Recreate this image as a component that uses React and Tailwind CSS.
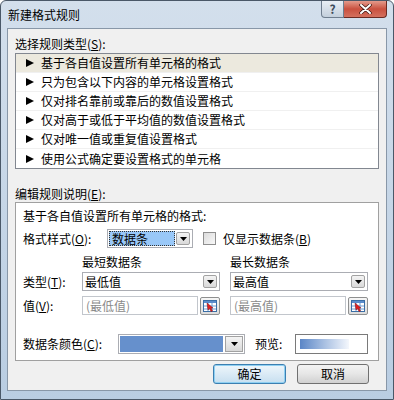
import React from "react";

const FONT = { fontFamily: '"Noto Sans CJK SC", "Liberation Sans", sans-serif' };

const rules = [
  "基于各自值设置所有单元格的格式",
  "只为包含以下内容的单元格设置格式",
  "仅对排名靠前或靠后的数值设置格式",
  "仅对高于或低于平均值的数值设置格式",
  "仅对唯一值或重复值设置格式",
  "使用公式确定要设置格式的单元格",
];

const Key = ({ k }) => (
  <span>
    (<span className="underline">{k}</span>)
  </span>
);

const Arrow = () => (
  <span className="flex h-[13px] w-[14px] items-center justify-center rounded-[2px] border border-[#a2a2a2] bg-gradient-to-b from-[#f4f4f4] to-[#d9d9d9]">
    <svg width="7" height="4" viewBox="0 0 7 4">
      <path d="M0 0h7L3.5 4z" fill="#000" />
    </svg>
  </span>
);

const Combo = ({ children, className = "" }) => (
  <div className={`flex h-[19px] items-center justify-between border border-[#abadb3] bg-white pl-[2px] pr-[2px] ${className}`}>
    {children}
    <Arrow />
  </div>
);

const RefButton = () => (
  <div className="flex h-[18px] w-[20px] items-center justify-center rounded-[2px] border border-[#8e8f8f] bg-gradient-to-b from-[#f6f6f6] to-[#dcdcdc]">
    <svg width="14" height="12" viewBox="0 0 14 12">
      <rect x="0.5" y="0.5" width="13" height="11" fill="#fff" stroke="#3a6ea5" />
      <rect x="1" y="1" width="12" height="2" fill="#5a8ccc" />
      <path d="M1 6h12M1 9h12M5 3v8M9 3v8" stroke="#6c9bd2" strokeWidth="1" />
      <path d="M4 3l6 5-2 0 1.5 3-1.5 .6L6.6 8.6 5 10z" fill="#e02020" stroke="#901010" strokeWidth="0.5" />
    </svg>
  </div>
);

export default function App() {
  return (
    <div
      className="flex h-[400px] w-[394px] flex-col overflow-hidden rounded-t-[6px] border border-[#4a5868] bg-gradient-to-b from-[#d3dfec] via-[#c6d6e7] to-[#b9cde2] text-[12px] text-black"
      style={FONT}
    >
      {/* title bar */}
      <div className="flex h-[27px] shrink-0 items-start justify-between pl-[7px] pr-[6px]">
        <div className="mt-[6px] leading-4">新建格式规则</div>
        <div className="flex">
          <div className="flex h-[17px] w-[23px] items-center justify-center rounded-bl-[4px] border border-t-0 border-[#6e7d8e] bg-gradient-to-b from-[#e8eef5] to-[#c3cfdc] text-[12px] font-bold leading-none text-[#3c4a5a]">
            ?
          </div>
          <div className="flex h-[17px] w-[43px] items-center justify-center rounded-br-[4px] border border-l-0 border-t-0 border-[#6b2a22] bg-gradient-to-b from-[#e39a8c] via-[#c9503f] to-[#d4705e]">
            <svg width="13" height="10" viewBox="0 0 13 10">
              <path d="M2 1l9 8M11 1L2 9" stroke="#3a1510" strokeWidth="3.4" strokeLinecap="round" />
              <path d="M2 1l9 8M11 1L2 9" stroke="#fff" strokeWidth="2" strokeLinecap="round" />
            </svg>
          </div>
        </div>
      </div>

      {/* client area */}
      <div className="mx-[6px] mb-[8px] flex flex-1 flex-col border border-[#8897a8] bg-[#f0f0f0] px-[7px]">
        <div className="mt-[7px] leading-4">
          选择规则类型<Key k="S" />:
        </div>
        <div className="mt-[1px] border border-[#828790] bg-white">
          {rules.map((r, i) => (
            <div
              key={r}
              className={`flex h-[19px] items-center border-b border-[#f0f0f0] last:border-b-0 pl-[10px] ${
                i === 0 ? "bg-[#ece9de]" : ""
              }`}
            >
              <svg width="8" height="8" viewBox="0 0 8 8" className="mr-[7px]">
                <path d="M0 0L8 4L0 8z" fill="#000" />
              </svg>
              <span>{r}</span>
            </div>
          ))}
        </div>

        <div className="mt-[17px] leading-4">
          编辑规则说明<Key k="E" />:
        </div>
        <div className="flex flex-col border border-[#a0a0a0] bg-white px-[7px] pb-[6px] pt-[5px]">
          <div className="leading-4">基于各自值设置所有单元格的格式:</div>

          <div className="mt-[5px] flex h-[19px] items-center">
            <div className="w-[84px]">
              格式样式<Key k="O" />:
            </div>
            <div className="flex h-[19px] w-[86px] items-center justify-between border border-[#abadb3] bg-white pl-[1px] pr-[2px]">
              <span className="flex h-[15px] w-[66px] items-center border border-dotted border-[#333] bg-[#99c8f8] pl-[2px]">
                数据条
              </span>
              <Arrow />
            </div>
            <span className="ml-[10px] h-[13px] w-[13px] border border-[#8f8f8f] bg-gradient-to-br from-[#dcdcdc] to-[#f8f8f8]" />
            <span className="ml-[7px]">
              仅显示数据条<Key k="B" />
            </span>
          </div>

          <div className="mt-[6px] flex leading-4">
            <div className="w-[59px]" />
            <div className="w-[148px]">最短数据条</div>
            <div>最长数据条</div>
          </div>

          <div className="mt-[2px] flex h-[19px] items-center">
            <div className="w-[59px]">
              类型<Key k="T" />:
            </div>
            <Combo className="w-[138px]">最低值</Combo>
            <Combo className="ml-[10px] w-[138px]">最高值</Combo>
          </div>

          <div className="mt-[5px] flex h-[19px] items-center">
            <div className="w-[59px]">
              值<Key k="V" />:
            </div>
            <div className="flex w-[138px] items-center">
              <div className="flex h-[19px] w-[116px] items-center border border-[#c2c6cc] bg-white pl-[3px] text-[#8a8a8a]">
                (最低值)
              </div>
              <div className="ml-[2px]">
                <RefButton />
              </div>
            </div>
            <div className="ml-[10px] flex w-[138px] items-center">
              <div className="flex h-[19px] w-[116px] items-center border border-[#c2c6cc] bg-white pl-[3px] text-[#8a8a8a]">
                (最高值)
              </div>
              <div className="ml-[2px]">
                <RefButton />
              </div>
            </div>
          </div>

          <div className="mt-[19px] flex h-[20px] items-center">
            <div className="w-[95px]">
              数据条颜色<Key k="C" />:
            </div>
            <div className="flex h-[20px] w-[127px] items-center border border-[#abadb3] bg-white pl-[1px] pr-[1px]">
              <span className="h-[16px] w-[104px] bg-[#6690cc]" />
              <span className="ml-[2px] flex h-[16px] w-[18px] items-center justify-center border border-[#a2a2a2] bg-gradient-to-b from-[#f4f4f4] to-[#d9d9d9]">
                <svg width="7" height="4" viewBox="0 0 7 4">
                  <path d="M0 0h7L3.5 4z" fill="#000" />
                </svg>
              </span>
            </div>
            <div className="ml-[10px] w-[40px]">预览:</div>
            <div className="flex h-[20px] w-[73px] items-center border border-[#7a7a7a] bg-white px-[4px]">
              <span className="h-[10px] w-[49px] bg-gradient-to-r from-[#5b86c6] via-[#a9c0e2] to-[#f4f7fc]" />
            </div>
          </div>
        </div>

        <div className="mt-[3px] flex justify-end gap-[11px] pr-[10px]">
          <button className="flex h-[20px] w-[73px] items-center justify-center rounded-[3px] border border-[#3c7fb1] bg-gradient-to-b from-[#eef6fb] to-[#c7dff0] shadow-[inset_0_0_0_1px_#8fd0f2]">
            确定
          </button>
          <button className="flex h-[20px] w-[72px] items-center justify-center rounded-[3px] border border-[#707070] bg-gradient-to-b from-[#f3f3f3] via-[#e6e6e6] to-[#d0d0d0]">
            取消
          </button>
        </div>
      </div>
    </div>
  );
}
